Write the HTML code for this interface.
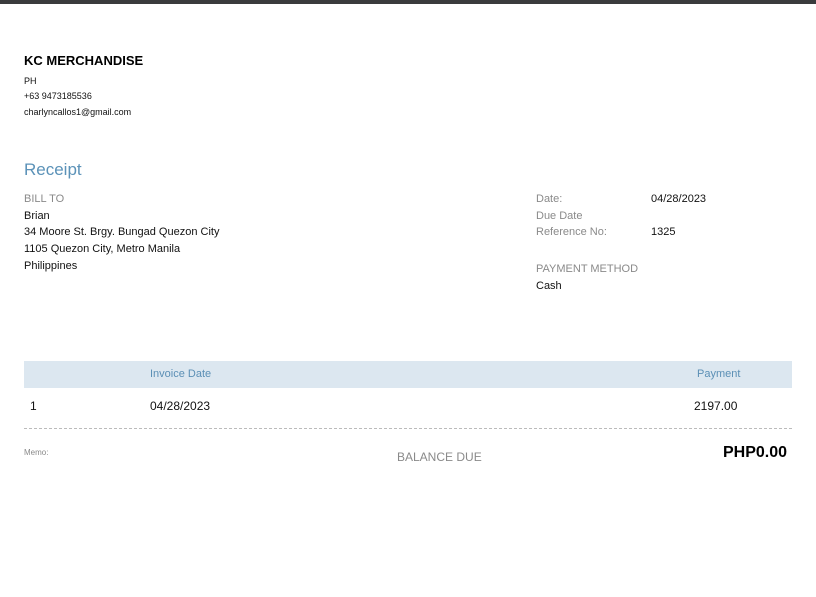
<!DOCTYPE html>
<html><head><meta charset="utf-8"><style>
*{margin:0;padding:0;box-sizing:border-box}
body{width:816px;height:597px;background:#fff;font-family:"Liberation Sans",Arial,sans-serif;position:relative;overflow:hidden;color:#111}
.a{position:absolute;white-space:nowrap}
.g{color:#8a8a8a}
</style></head><body>
<div class="a" style="left:0;top:0;width:816px;height:4px;background:#3a3b3d"></div>
<div class="a" style="left:24px;top:53px;font-size:13px;font-weight:bold;color:#000">KC MERCHANDISE</div>
<div class="a" style="left:24px;top:76px;font-size:9px">PH</div>
<div class="a" style="left:24px;top:91px;font-size:9px">+63 9473185536</div>
<div class="a" style="left:24px;top:107px;font-size:9px">charlyncallos1@gmail.com</div>
<div class="a" style="left:24px;top:160px;font-size:17px;color:#5b92b8">Receipt</div>
<div class="a g" style="left:24px;top:193px;font-size:11px">BILL TO</div>
<div class="a" style="left:24px;top:210px;font-size:11px">Brian</div>
<div class="a" style="left:24px;top:226px;font-size:11px">34 Moore St. Brgy. Bungad Quezon City</div>
<div class="a" style="left:24px;top:243px;font-size:11px">1105 Quezon City, Metro Manila</div>
<div class="a" style="left:24px;top:260px;font-size:11px">Philippines</div>
<div class="a g" style="left:536px;top:193px;font-size:11px">Date:</div>
<div class="a" style="left:651px;top:193px;font-size:11px">04/28/2023</div>
<div class="a g" style="left:536px;top:210px;font-size:11px">Due Date</div>
<div class="a g" style="left:536px;top:226px;font-size:11px">Reference No:</div>
<div class="a" style="left:651px;top:226px;font-size:11px">1325</div>
<div class="a g" style="left:536px;top:263px;font-size:11px">PAYMENT METHOD</div>
<div class="a" style="left:536px;top:280px;font-size:11px">Cash</div>
<div class="a" style="left:24px;top:361px;width:768px;height:27px;background:#dce7f0"></div>
<div class="a" style="left:150px;top:368px;font-size:11px;color:#5b8fb5">Invoice Date</div>
<div class="a" style="left:697px;top:368px;font-size:11px;color:#5b8fb5">Payment</div>
<div class="a" style="left:30px;top:399px;font-size:12px">1</div>
<div class="a" style="left:150px;top:399px;font-size:12px">04/28/2023</div>
<div class="a" style="left:694px;top:399px;font-size:12px">2197.00</div>
<div class="a" style="left:24px;top:428px;width:768px;border-top:1px dashed #bbb"></div>
<div class="a g" style="left:24px;top:448px;font-size:8px">Memo:</div>
<div class="a g" style="left:397px;top:450px;font-size:12px">BALANCE DUE</div>
<div class="a" style="left:723px;top:444px;font-size:16px;font-weight:bold;color:#000">PHP0.00</div>
</body></html>
